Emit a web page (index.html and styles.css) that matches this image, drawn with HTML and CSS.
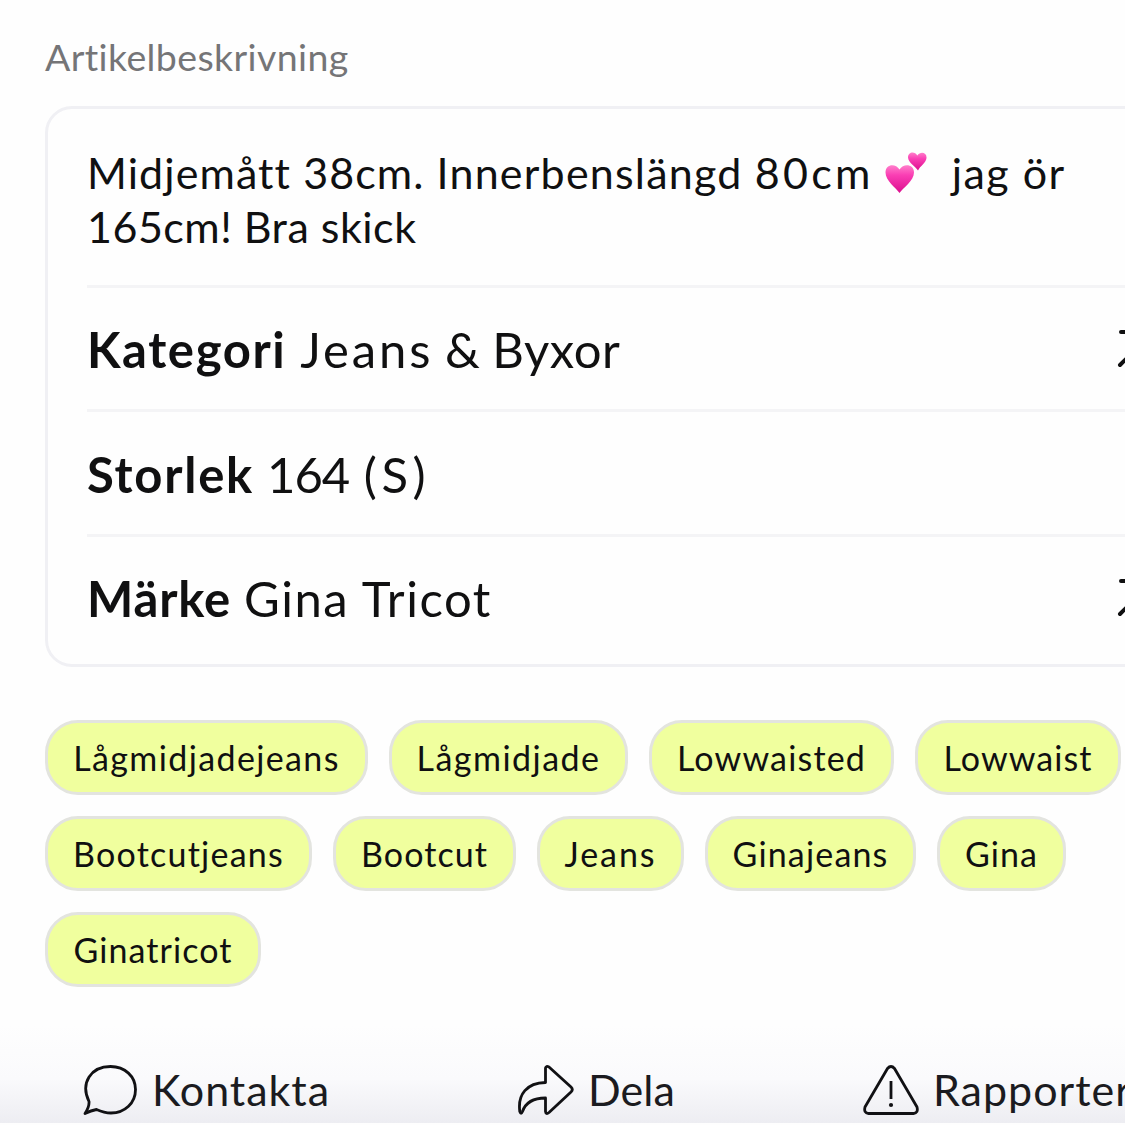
FILE: index.html
```
<!DOCTYPE html>
<html lang="sv">
<head>
<meta charset="utf-8">
<title>Artikelbeskrivning</title>
<link rel="stylesheet" href="styles.css">
</head>
<body>
<main class="page">
  <h2 class="label">Artikelbeskrivning</h2>
  <section class="card">
    <p class="desc"><span class="desc-a">Midjemått 38cm. </span><span class="desc-b">Innerbenslängd </span><span class="desc-c">80cm</span><svg class="hearts" viewBox="0 0 42 42"><defs><linearGradient id="pink" x1="0" y1="0" x2="0" y2="1"><stop offset="0" stop-color="#ff7fcb"/><stop offset=".35" stop-color="#fa3fb4"/><stop offset="1" stop-color="#dc0f8e"/></linearGradient></defs><path fill="url(#pink)" d="M14.500 41C11 36 .5 28.500 .5 20.500C.5 12 10.500 11 14.500 17.500C18.500 11 29 12 29 20.500C29 28.500 18 36 14.500 41Z"/><path fill="url(#pink)" d="M33 18.500C30.500 14.500 23.500 11 23 5.500C23 -.5 30 -1 32.300 3.500C35.500 -1 42 .5 41.500 6C41 11 35 14 33 18.500Z"/></svg><span class="desc-mid">jag ör</span><br><span class="desc-end">165cm! Bra skick</span></p>
    <div class="row"><span class="row-text"><b class="k1">Kategori</b><span class="v1"><span class="v1-first">Jeans</span> &amp; Byxor</span></span><svg class="arrow" viewBox="0 0 40 40"><path d="M4 4H36V36M36 4L3 37"/></svg></div>
    <div class="row"><span class="row-text"><b class="k2">Storlek</b><span class="v2">164 <span class="v2-size">(S)</span></span></span></div>
    <div class="row"><span class="row-text"><b class="k3">Märke</b><span class="v3">Gina Tricot</span></span><svg class="arrow" viewBox="0 0 40 40"><path d="M4 4H36V36M36 4L3 37"/></svg></div>
  </section>
  <div class="tags">
    <div class="tag-line"><span class="tag t1">Lågmidjadejeans</span><span class="tag t2">Lågmidjade</span><span class="tag t3">Lowwaisted</span><span class="tag t4">Lowwaist</span></div>
    <div class="tag-line"><span class="tag t5">Bootcutjeans</span><span class="tag t6">Bootcut</span><span class="tag t7">Jeans</span><span class="tag t8">Ginajeans</span><span class="tag t9">Gina</span></div>
    <div class="tag-line"><span class="tag t10">Ginatricot</span></div>
  </div>
  <footer class="actions">
    <div class="action"><svg class="icon" viewBox="0 0 56 52"><path d="M3 49.500Q7.500 43 7 37.500C-2 19 9 2.500 28.500 2.500C43 2.500 53.500 12.500 53.500 25.500C53.500 39 43 49 29 49C23 49 19 47.500 14.500 45.500Q9 46.500 3 49.500Z"/></svg><span class="a1">Kontakta</span></div>
    <div class="action"><svg class="icon" viewBox="0 0 56 52"><path d="M27.500 4Q28 1.500 31 3L53 23Q55.500 25.500 53 28L31 48.500Q28 51 27.500 47.500V34C16 34 8 37.500 4.500 47.500Q3 51 1.800 47.500C-.5 30 9 19 27.500 18.500Z"/></svg><span class="a2">Dela</span></div>
    <div class="action"><svg class="icon" viewBox="0 0 56 52"><path d="M24.500 4.500Q28 .5 31.500 4.500L54 43Q55.500 49 50.500 49.500H5.500Q.5 49 2 43Z"/><path d="M28 17V35"/><circle cx="28" cy="41" r="2.100"/></svg><span class="a3">Rapportera</span></div>
  </footer>
</main>
</body>
</html>
```
FILE: styles.css
```
* { box-sizing: border-box; }
body {
  margin: 0;
  background: #fefefe;
  color: #101011;
  font-family: Lato, "Liberation Sans", sans-serif;
  font-variant-ligatures: none;
}
.page {
  width: 1125px;
  height: 1125px;
  overflow: hidden;
  padding-top: 35px;
  display: flex;
  flex-direction: column;
}
.label {
  margin: 0 0 0 45px;
  font-size: 37.500px;
  font-weight: 400;
  line-height: 44px;
  letter-spacing: .4px;
  color: #757577;
}
.card {
  margin: 27px 0 0 45px;
  width: 1170px;
  height: 561px;
  padding: 37px 39px 0;
  border: 3px solid #f0f0f4;
  border-radius: 27px;
}
.desc {
  margin: 0;
  height: 138.500px;
  font-size: 43px;
  line-height: 54px;
  white-space: nowrap;
}
.desc-a { letter-spacing: 1.080px; }
.desc-b { letter-spacing: 1.200px; }
.desc-c { letter-spacing: 3.300px; }
.desc-mid { margin-left: 25px; letter-spacing: 1.500px; }
.desc-end { letter-spacing: .5px; }
.hearts { width: 42px; height: 42px; margin-left: 11px; vertical-align: -5px; }
.row {
  height: 124.500px;
  padding-top: 2px;
  border-top: 3px solid #f4f4f6;
  display: flex;
  align-items: center;
  justify-content: space-between;
}
.row-text { font-size: 49px; line-height: 60px; display: flex; gap: 14px; }
.k1 { letter-spacing: 1.600px; }
.v1 { letter-spacing: .6px; word-spacing: -1.500px; }
.v1-first { letter-spacing: 2.900px; }
.k2 { letter-spacing: 1.740px; }
.v2 { letter-spacing: -1px; margin-left: -1px; word-spacing: 3px; }
.v2-size { letter-spacing: 4.500px; }
.k3 { letter-spacing: .820px; }
.v3 { letter-spacing: 1.530px; margin-left: -1px; }
.arrow {
  width: 40px;
  height: 40px;
  margin: -2px 16px 0 0;
  fill: none;
  stroke: #101011;
  stroke-width: 4;
  stroke-linecap: round;
}
.tags { margin: 53px 0 0 45px; display: flex; flex-direction: column; gap: 21px; }
.tag-line { display: flex; gap: 21px; }
.tag {
  flex: none;
  height: 75px;
  border: 3px solid #e3e4df;
  border-radius: 33px;
  background: #f0ff9e;
  font-size: 34px;
  line-height: 69px;
  text-align: center;
  white-space: nowrap;
}
.t1 { width: 323px; letter-spacing: 1.380px; }
.t2 { width: 239px; letter-spacing: 1.470px; }
.t3 { width: 245px; letter-spacing: 1.170px; }
.t4 { width: 206px; letter-spacing: 1.070px; }
.t5 { width: 267px; letter-spacing: 1.240px; }
.t6 { width: 183px; letter-spacing: 1.080px; }
.t7 { width: 147px; letter-spacing: 1.940px; }
.t8 { width: 211px; letter-spacing: 1.170px; }
.t9 { width: 129px; letter-spacing: 1.070px; }
.t10 { width: 216px; letter-spacing: 1.070px; }
.actions {
  margin-top: 38px;
  height: 98px;
  padding: 39px 0 0 82px;
  display: grid;
  grid-template-columns: 436px 345px 300px;
  background: linear-gradient(#fefefe, #fafafc 55%, #ededf2);
}
.action {
  height: 52px;
  display: flex;
  align-items: center;
  gap: 14px;
  font-size: 43px;
  line-height: 52px;
  color: #1b1b20;
}
.icon {
  flex: none;
  width: 56px;
  height: 52px;
  fill: none;
  stroke: #111114;
  stroke-width: 2.800;
  stroke-linejoin: round;
}
.icon circle { fill: #111114; stroke: none; }
.a1 { letter-spacing: .960px; }
.a2 { letter-spacing: .100px; }
.a3 { letter-spacing: 1px; }
```
